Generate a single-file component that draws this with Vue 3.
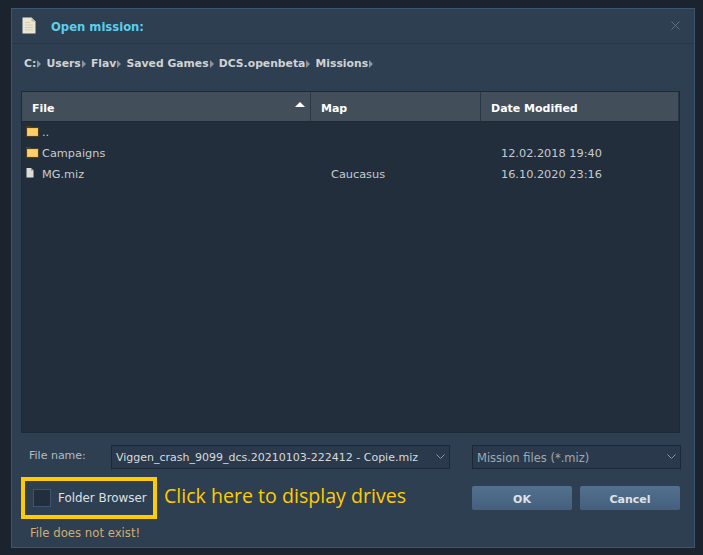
<script setup>
const crumbs = ['C:', 'Users', 'Flav', 'Saved Games', 'DCS.openbeta', 'Missions']

const rows = [
  { name: '..', type: 'folder', map: '', date: '' },
  { name: 'Campaigns', type: 'folder', map: '', date: '12.02.2018 19:40' },
  { name: 'MG.miz', type: 'file', map: 'Caucasus', date: '16.10.2020 23:16' }
]
</script>

<template>
  <div class="page">
    <div class="dialog">
      <div class="title-bar">
        <svg class="doc-icon" width="14" height="17" viewBox="0 0 14 17">
          <path d="M0.5 0.5H9.5L13.5 4.5V16.5H0.5Z" fill="#ece7d2" />
          <path d="M9.5 0.5V4.5H13.5Z" fill="#bdb8a3" />
          <path d="M3 5.5H8M3 8H11M3 10.5H11M3 13H11" stroke="#d3ceb8" stroke-width="1" />
        </svg>
        <span class="title">Open mission:</span>
        <svg class="close" width="9" height="9" viewBox="0 0 9 9">
          <path d="M0.5 0.5L8.5 8.5M8.5 0.5L0.5 8.5" stroke="#5f7286" stroke-width="1" />
        </svg>
      </div>

      <div class="crumbs">
        <span v-for="crumb in crumbs" :key="crumb" class="crumb">
          {{ crumb }}<i class="arrow"></i>
        </span>
      </div>

      <div class="table">
        <div class="head">
          <div class="col col-file">File<i class="sort"></i></div>
          <div class="col col-map">Map</div>
          <div class="col col-date">Date Modified</div>
        </div>
        <div class="rows">
          <div v-for="row in rows" :key="row.name" class="row">
            <div class="cell-name">
              <svg v-if="row.type === 'folder'" class="row-icon" width="13" height="11" viewBox="0 0 13 11">
                <path d="M0 0H4.5L5.5 1H13V11H0Z" fill="#4b3f24" />
                <rect x="1" y="2" width="11" height="8" fill="#fdbf4f" />
                <rect x="2" y="3" width="9" height="6" fill="#ffcf6e" />
              </svg>
              <svg v-else class="row-icon file-icon" width="8" height="10" viewBox="0 0 8 10">
                <path d="M0.5 0H5L7.5 2.5V9.5H0.5Z" fill="#dcdcd8" />
                <path d="M5 0V2.5H7.5Z" fill="#8d8f90" />
              </svg>
              <span>{{ row.name }}</span>
            </div>
            <div class="cell-map">{{ row.map }}</div>
            <div class="cell-date">{{ row.date }}</div>
          </div>
        </div>
      </div>

      <div class="name-row">
        <span class="name-label">File name:</span>
        <div class="select select-name">
          <span>Viggen_crash_9099_dcs.20210103-222412 - Copie.miz</span>
          <svg width="9" height="5" viewBox="0 0 9 5"><path d="M0.5 0.5L4.5 4.5L8.5 0.5" fill="none" stroke="#8796a5" /></svg>
        </div>
        <div class="select select-type">
          <span>Mission files (*.miz)</span>
          <svg width="9" height="5" viewBox="0 0 9 5"><path d="M0.5 0.5L4.5 4.5L8.5 0.5" fill="none" stroke="#8796a5" /></svg>
        </div>
      </div>

      <div class="action-row">
        <div class="highlight">
          <span class="checkbox"></span>
          <span class="check-label">Folder Browser</span>
        </div>
        <span class="hint">Click here to display drives</span>
        <div class="buttons">
          <button class="btn">OK</button>
          <button class="btn">Cancel</button>
        </div>
      </div>

      <div class="error">File does not exist!</div>
    </div>
  </div>
</template>

<style scoped>
.page {
  width: 703px;
  height: 555px;
  box-sizing: border-box;
  padding: 8px 8px 7px 11px;
  background: #1a232e;
  font-family: "DejaVu Sans", sans-serif;
  overflow: hidden;
}

.dialog {
  height: 100%;
  box-sizing: border-box;
  border: 1px solid #3d5570;
  background: #2e3f52;
}

.title-bar {
  height: 35px;
  box-sizing: border-box;
  display: flex;
  align-items: center;
  padding: 0 13px 0 10px;
  border-bottom: 1px solid #25364a;
}

.doc-icon {
  margin-top: -1px;
  flex: none;
}

.title {
  margin-left: 15px;
  font-size: 11.6px;
  font-weight: bold;
  color: #5bcdee;
  margin-top: 2px;
}

.close {
  margin-left: auto;
  margin-right: 1px;
  margin-top: -2px;
}

.crumbs {
  display: flex;
  height: 47px;
  padding: 13px 0 0 12px;
  box-sizing: border-box;
  font-size: 10.8px;
  font-weight: bold;
  color: #d0d2d3;
  line-height: 14px;
}

.crumb {
  display: flex;
  align-items: center;
  height: 14px;
  white-space: pre;
  margin-right: 5.2px;
}

.arrow {
  display: block;
  width: 0;
  height: 0;
  margin-left: 1px;
  border-left: 4px solid #8a949e;
  border-top: 4px solid transparent;
  border-bottom: 4px solid transparent;
}

.table {
  height: 342px;
  margin: 0 14px 0 9px;
  border: 1px solid #1c2a38;
  box-sizing: border-box;
  background: #222e3c;
}

.head {
  display: flex;
  height: 29px;
  border-bottom: 1px solid #1c2a38;
  background: #434e5b;
  box-sizing: content-box;
  color: #ffffff;
  font-size: 11px;
  font-weight: bold;
  line-height: 34px;
}

.col {
  box-sizing: border-box;
  padding-left: 10px;
  border-right: 1px solid #2a3846;
  position: relative;
}

.col-file {
  width: 289px;
}

.col-map {
  width: 170px;
}

.col-date {
  width: 198px;
}

.sort {
  position: absolute;
  right: 5px;
  top: 10px;
  width: 0;
  height: 0;
  border-left: 5px solid transparent;
  border-right: 5px solid transparent;
  border-bottom: 5px solid #ffffff;
}

.row {
  display: flex;
  height: 21px;
  align-items: center;
  font-size: 11.3px;
  color: #c6cbcf;
}

.cell-name {
  width: 309px;
  padding-left: 4px;
  box-sizing: border-box;
  display: flex;
  align-items: center;
}

.row-icon {
  flex: none;
  width: 13px;
  margin-top: -3px;
  margin-right: 3px;
}

.file-icon {
  width: 8px;
  padding-right: 5px;
  padding-left: 1px;
  margin-left: -1px;
}

.cell-map {
  width: 170px;
}

.cell-date {
  flex: 1;
}

.name-row {
  display: flex;
  align-items: center;
  margin-top: 12px;
  padding-left: 17px;
}

.name-label {
  width: 82px;
  font-size: 11px;
  color: #b4bcc4;
  margin-top: -4px;
}

.select {
  height: 24px;
  box-sizing: border-box;
  border: 1px solid #1c2836;
  background: #2a3a4c;
  display: flex;
  align-items: center;
  justify-content: space-between;
  padding: 1px 4px 0 4px;
  font-size: 11px;
  white-space: nowrap;
}

.select svg {
  margin-top: -2px;
  flex: none;
}

.select-name {
  width: 339px;
  color: #d6dadd;
}

.select-type {
  width: 209px;
  margin-left: 22px;
  color: #9fa8b1;
  font-size: 11.5px;
}

.action-row {
  display: flex;
  align-items: center;
  margin-top: 8px;
  padding-left: 9px;
}

.highlight {
  width: 136px;
  height: 42px;
  box-sizing: border-box;
  border: 4px solid #ffcc00;
  display: flex;
  align-items: center;
  padding-left: 8px;
  flex: none;
}

.checkbox {
  width: 18px;
  height: 18px;
  box-sizing: border-box;
  border: 1px solid #3d5570;
  background: #222e3c;
  flex: none;
}

.check-label {
  margin-left: 7px;
  font-size: 11.9px;
  color: #dde0e3;
  white-space: nowrap;
}

.hint {
  margin-left: 7px;
  margin-top: -5px;
  font-family: "Open Sans", sans-serif;
  font-size: 19.6px;
  color: #ffcc00;
  white-space: nowrap;
}

.buttons {
  display: flex;
  gap: 8px;
  margin-left: auto;
  margin-right: 14px;
}

.btn {
  width: 100px;
  height: 24px;
  padding: 2px 0 0;
  border: none;
  border-radius: 2px;
  background: linear-gradient(#54708f, #45607f);
  color: #dfe2e5;
  font-family: "DejaVu Sans", sans-serif;
  font-size: 11px;
  font-weight: bold;
}

.error {
  margin: 7px 0 0 18px;
  font-size: 11.7px;
  color: #d0ad72;
}
</style>

<style>
html, body {
  margin: 0;
  background: #1a232e;
}
</style>
